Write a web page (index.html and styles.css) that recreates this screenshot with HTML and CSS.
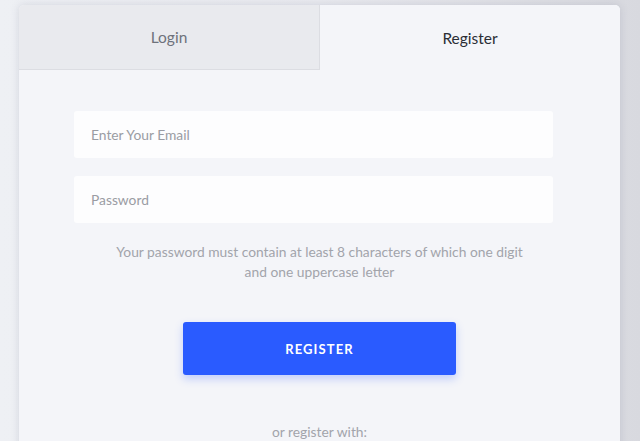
FILE: index.html
```html
<!DOCTYPE html>
<html lang="en">
<head>
  <meta charset="UTF-8">
  <meta name="viewport" content="width=device-width, initial-scale=1.0">
  <title>Register</title>
  <link rel="stylesheet" href="styles.css">
</head>
<body>
  <div class="card">
    <div class="tabs">
      <button class="tab">Login</button>
      <button class="tab active">Register</button>
    </div>
    <form class="form">
      <div class="fields">
        <input type="email" placeholder="Enter Your Email">
        <input type="password" placeholder="Password">
      </div>
      <p class="hint">Your password must contain at least 8 characters of which one digit<br>and one uppercase letter</p>
      <button type="button" class="submit">REGISTER</button>
      <p class="alt">or register with:</p>
    </form>
  </div>
</body>
</html>
```

FILE: styles.css
```css
body, html {
  margin: 0;
  padding: 0;
  height: 100%;
  overflow: hidden;
  font-family: Lato, 'Liberation Sans', Arial, sans-serif;
}
body {
  background: linear-gradient(90deg, #eef0f4 0%, #e9eaef 50%, #d8d9df 100%);
}
.card {
  width: 601px;
  margin: 5px 0 0 19px;
  height: 480px;
  background-color: #f4f5f9;
  border-radius: 5px 5px 0 0;
  box-shadow: 0 0 8px rgba(90, 95, 120, 0.18);
  overflow: hidden;
}
.tabs {
  display: flex;
  height: 65px;
}
.tab {
  flex: 1;
  border: none;
  background: #f4f5f9;
  font-family: inherit;
  font-size: 15.5px;
  color: #2b2e35;
  cursor: pointer;
  padding: 0;
}
.tab:first-child {
  background-color: #e9eaee;
  color: #6e727b;
  border-right: 1px solid #dcdde2;
  border-bottom: 1px solid #dcdde2;
}
.form {
  padding-top: 41px;
}
.fields {
  margin: 0 67px 0 55px;
  display: flex;
  flex-direction: column;
  gap: 18px;
}
.fields input {
  height: 47px;
  box-sizing: border-box;
  border: none;
  border-radius: 3px;
  background-color: #fdfdfe;
  padding: 0 17px;
  font-family: inherit;
  font-size: 13.8px;
  color: #333;
}
.fields input::placeholder {
  color: #9a9ca3;
}
.hint {
  margin: 19px 0 0;
  text-align: center;
  font-size: 13.8px;
  line-height: 20px;
  color: #a2a4ab;
}
.submit {
  display: block;
  margin: 40px auto 0;
  width: 273px;
  height: 53px;
  border: none;
  border-radius: 3px;
  background-color: #2a5bff;
  color: #fff;
  font-family: inherit;
  font-weight: 700;
  font-size: 13px;
  letter-spacing: 1.1px;
  box-shadow: 0 4px 8px rgba(42, 91, 255, 0.25);
  cursor: pointer;
}
.alt {
  margin: 48px 0 0;
  text-align: center;
  font-size: 13.8px;
  color: #a2a4ab;
}
```
